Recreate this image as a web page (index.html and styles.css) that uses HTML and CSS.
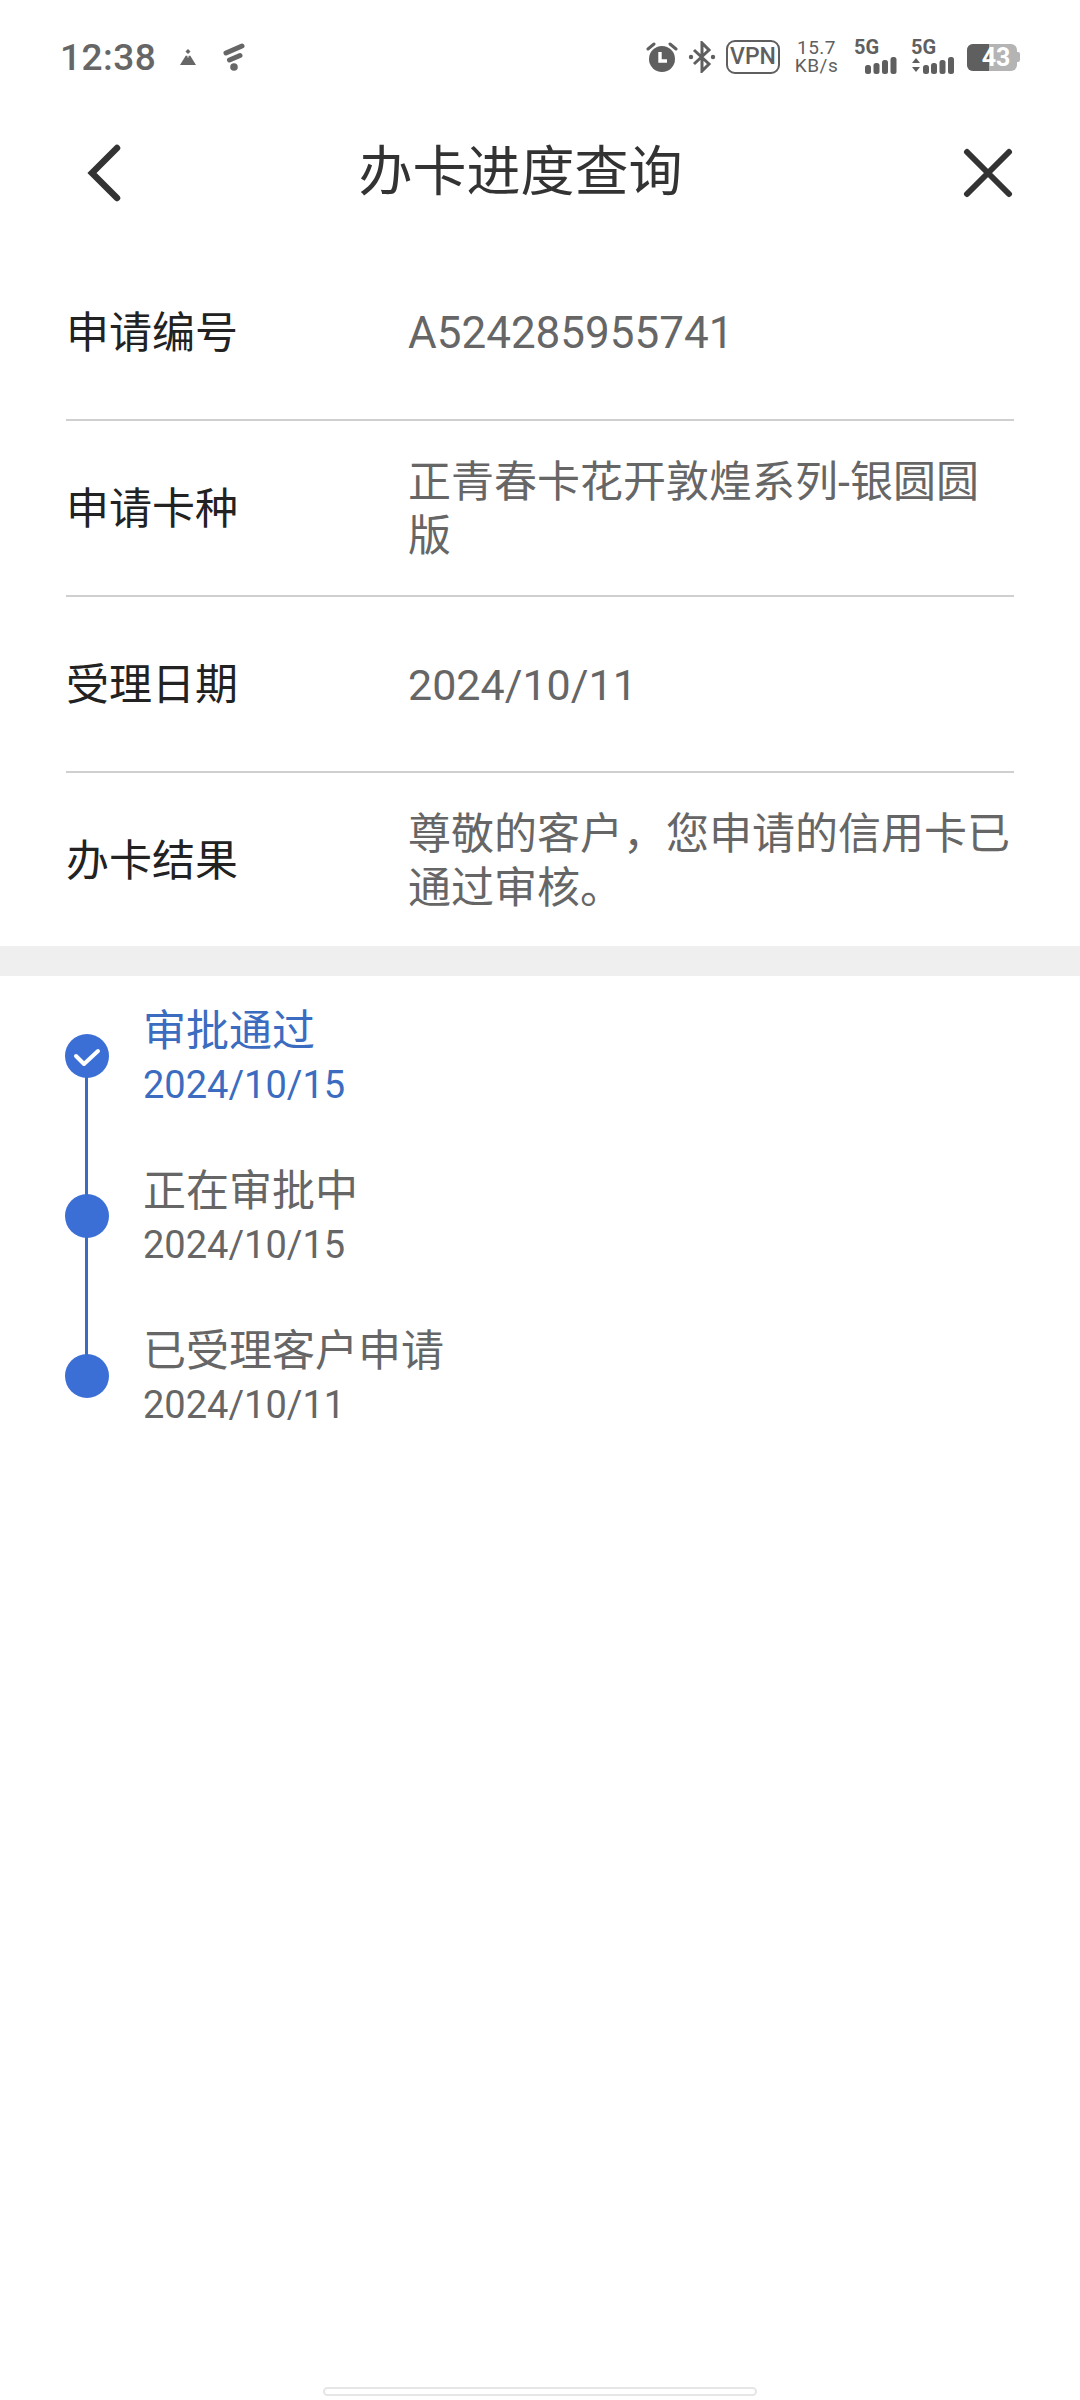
FILE: index.html
```html
<!DOCTYPE html>
<html lang="zh-CN">
<head>
  <meta charset="UTF-8" />
  <title>办卡进度查询</title>
  <link rel="stylesheet" href="styles.css">
</head>
<body>
  <div class="page">
    <div class="statusbar">
      <div class="status-left">
        <span class="clock">12:38</span>
        <svg class="ic-hat" viewBox="0 0 14 14"><path d="M7 0l2.200 2.200L7 4.400 4.800 2.200z M5 6h1.500v1.500h1V6H9l5 8H0z" fill="#666"/></svg>
        <svg class="ic-wifi" viewBox="0 0 22 28"><path d="M3 10L19 3M6.500 17L17 12.500" stroke="#666" stroke-width="5" stroke-linecap="round" fill="none"/><circle cx="11" cy="24" r="3.800" fill="#666"/></svg>
      </div>
      <div class="status-right">
        <svg class="ic-alarm" viewBox="0 0 32 32"><circle cx="16" cy="18" r="13" fill="#5f5f5f"/><path d="M2 8l6-5M30 8l-6-5" stroke="#5f5f5f" stroke-width="3" stroke-linecap="round"/><path d="M14 11v9h7" stroke="#fff" stroke-width="3.400" fill="none"/></svg>
        <svg class="ic-bt" viewBox="0 0 28 32"><path d="M6 9l15 14-7 7V2l7 7L6 23" stroke="#5f5f5f" stroke-width="3" fill="none"/><circle cx="3" cy="16" r="2.200" fill="#5f5f5f"/><circle cx="25" cy="16" r="2.200" fill="#5f5f5f"/></svg>
        <span class="vpn">VPN</span>
        <span class="speed"><span>15.7</span><span>KB/s</span></span>
        <div class="signal">
          <span class="g">5G</span>
          <svg viewBox="0 0 36 18"><g fill="#5f5f5f"><rect x="1" y="9" width="6" height="9" rx="2.500"/><rect x="9.500" y="7" width="6" height="11" rx="2.500"/><rect x="18" y="4" width="6" height="14" rx="2.500"/><rect x="26.500" y="1" width="6" height="17" rx="2.500"/></g></svg>
        </div>
        <div class="signal signal-arrows">
          <span class="g">5G</span>
          <svg viewBox="0 0 46 18"><g fill="#5f5f5f"><path d="M1 7l4-5 4 5zM1 11h8l-4 5z"/><rect x="12" y="9" width="6" height="9" rx="2.500"/><rect x="20" y="7" width="6" height="11" rx="2.500"/><rect x="28.500" y="4" width="6" height="14" rx="2.500"/><rect x="37" y="1" width="6" height="17" rx="2.500"/></g></svg>
        </div>
        <div class="battery">
          <div class="batt-body"><span class="batt-fill"></span><span class="batt-num">43</span></div>
          <span class="batt-nub"></span>
        </div>
      </div>
    </div>

    <div class="navbar">
      <svg class="ic-back" viewBox="0 0 40 60"><path d="M33 5L8 30l25 25" stroke="#333" stroke-width="6.500" fill="none" stroke-linecap="round"/></svg>
      <h1>办卡进度查询</h1>
      <svg class="ic-close" viewBox="0 0 50 50"><path d="M4 4l42 42M46 4L4 46" stroke="#333" stroke-width="6" stroke-linecap="round"/></svg>
    </div>

    <div class="info">
      <div class="row"><span class="label">申请编号</span><span class="value value-code">A524285955741</span></div>
      <div class="row"><span class="label">申请卡种</span><span class="value">正青春卡花开敦煌系列-银圆圆版</span></div>
      <div class="row"><span class="label">受理日期</span><span class="value">2024/10/11</span></div>
      <div class="row"><span class="label">办卡结果</span><span class="value">尊敬的客户，您申请的信用卡已通过审核。</span></div>
    </div>

    <div class="band"></div>

    <div class="timeline">
      <div class="step step-active">
        <div class="mark">
          <span class="dot"><svg viewBox="0 0 44 44"><path d="M11 22l8 8 14-13" stroke="#fff" stroke-width="4" fill="none" stroke-linecap="round" stroke-linejoin="round"/></svg></span>
        </div>
        <div class="step-text"><div class="step-title">审批通过</div><div class="step-date">2024/10/15</div></div>
      </div>
      <div class="step">
        <div class="mark"><span class="dot"></span></div>
        <div class="step-text"><div class="step-title">正在审批中</div><div class="step-date">2024/10/15</div></div>
      </div>
      <div class="step step-last">
        <div class="mark"><span class="dot"></span></div>
        <div class="step-text"><div class="step-title">已受理客户申请</div><div class="step-date">2024/10/11</div></div>
      </div>
    </div>

    <div class="home-bar"></div>
  </div>
</body>
</html>
```

FILE: styles.css
```css
* { box-sizing: border-box; }
body { margin: 0; background: #fff; font-family: "Roboto", "Noto Sans CJK SC", sans-serif; }
.page { width: 1080px; height: 2400px; position: relative; overflow: hidden; }

.statusbar { height: 114px; padding: 0 60px; display: flex; justify-content: space-between; align-items: center; color: #5f5f5f; }
.status-left { display: flex; align-items: center; }
.clock { font-size: 37px; font-weight: 500; color: #666; letter-spacing: 0.5px; }
.ic-hat { width: 16px; height: 16px; margin-left: 24px; }
.ic-wifi { width: 22px; height: 28px; margin-left: 27px; }
.status-right { display: flex; align-items: center; }
.ic-alarm { width: 32px; height: 32px; }
.ic-bt { width: 28px; height: 32px; margin-left: 10px; }
.vpn { margin-left: 10px; width: 54px; height: 34px; border: 2.500px solid #5f5f5f; border-radius: 9px; font-size: 23px; font-weight: 500; line-height: 29px; text-align: center; }
.speed { margin-left: 14px; width: 45px; display: flex; flex-direction: column; align-items: center; font-size: 19px; line-height: 18px; letter-spacing: 0.5px; }
.signal { margin-left: 15px; width: 46px; height: 34px; position: relative; }
.signal svg { position: absolute; right: 0; bottom: 0; width: 36px; height: 18px; }
.signal .g { position: absolute; left: 0; top: -3px; font-size: 20px; font-weight: 700; line-height: 20px; }
.signal-arrows { margin-left: 11px; }
.signal-arrows svg { width: 46px; }
.battery { margin-left: 10px; display: flex; align-items: center; }
.batt-body { width: 50px; height: 27px; background: #b4b4b4; border-radius: 6px; position: relative; overflow: hidden; }
.batt-fill { position: absolute; left: 0; top: 0; bottom: 0; width: 22px; background: #5f5f5f; }
.batt-num { position: absolute; left: 8px; right: 0; top: 0; text-align: center; color: #fff; font-size: 25px; font-weight: 700; line-height: 27px; }
.batt-nub { width: 3px; height: 10px; background: #b4b4b4; border-radius: 0 2px 2px 0; }

.navbar { height: 118px; padding: 0 67px 0 84px; display: flex; justify-content: space-between; align-items: center; }
.navbar h1 { margin: 0 46px 0 0; font-size: 54px; font-weight: 400; color: #333; line-height: 70px; }
.ic-back { width: 40px; height: 60px; }
.ic-close { width: 50px; height: 50px; }

.info { padding: 13px 66px 0; }
.row { height: 176px; display: flex; align-items: center; border-bottom: 2px solid #cfcfcf; }
.row:last-child { border-bottom: none; height: 173px; }
.label { width: 342px; flex: none; font-size: 43px; color: #222; padding-bottom: 6px; }
.value { font-size: 43px; line-height: 54px; color: #666; padding-top: 2px; }
.value-code { font-size: 44px; }

.band { height: 30px; background: #efefef; }

.timeline { padding: 30px 65px 0; }
.step { display: flex; height: 160px; }
.step-last { height: auto; }
.mark { width: 44px; flex: none; position: relative; padding-top: 28px; }
.dot { display: block; width: 44px; height: 44px; border-radius: 50%; background: #3b6fd6; position: relative; z-index: 1; }
.dot svg { display: block; width: 44px; height: 44px; }
.step .mark::after { content: ""; position: absolute; left: 20px; top: 50px; width: 3px; height: 160px; background: #3b6cc0; }
.step-last .mark::after { display: none; }
.step-text { margin-left: 34px; margin-top: -2px; }
.step-title { font-size: 43px; line-height: 54px; color: #666; }
.step-date { font-size: 38px; line-height: 54px; color: #666; }
.step-active .step-title, .step-active .step-date { color: #3b6cc0; }

.home-bar { position: absolute; left: 323px; top: 2387px; width: 434px; height: 9px; border: 2px solid #e6e6e6; border-radius: 5px; }
```
